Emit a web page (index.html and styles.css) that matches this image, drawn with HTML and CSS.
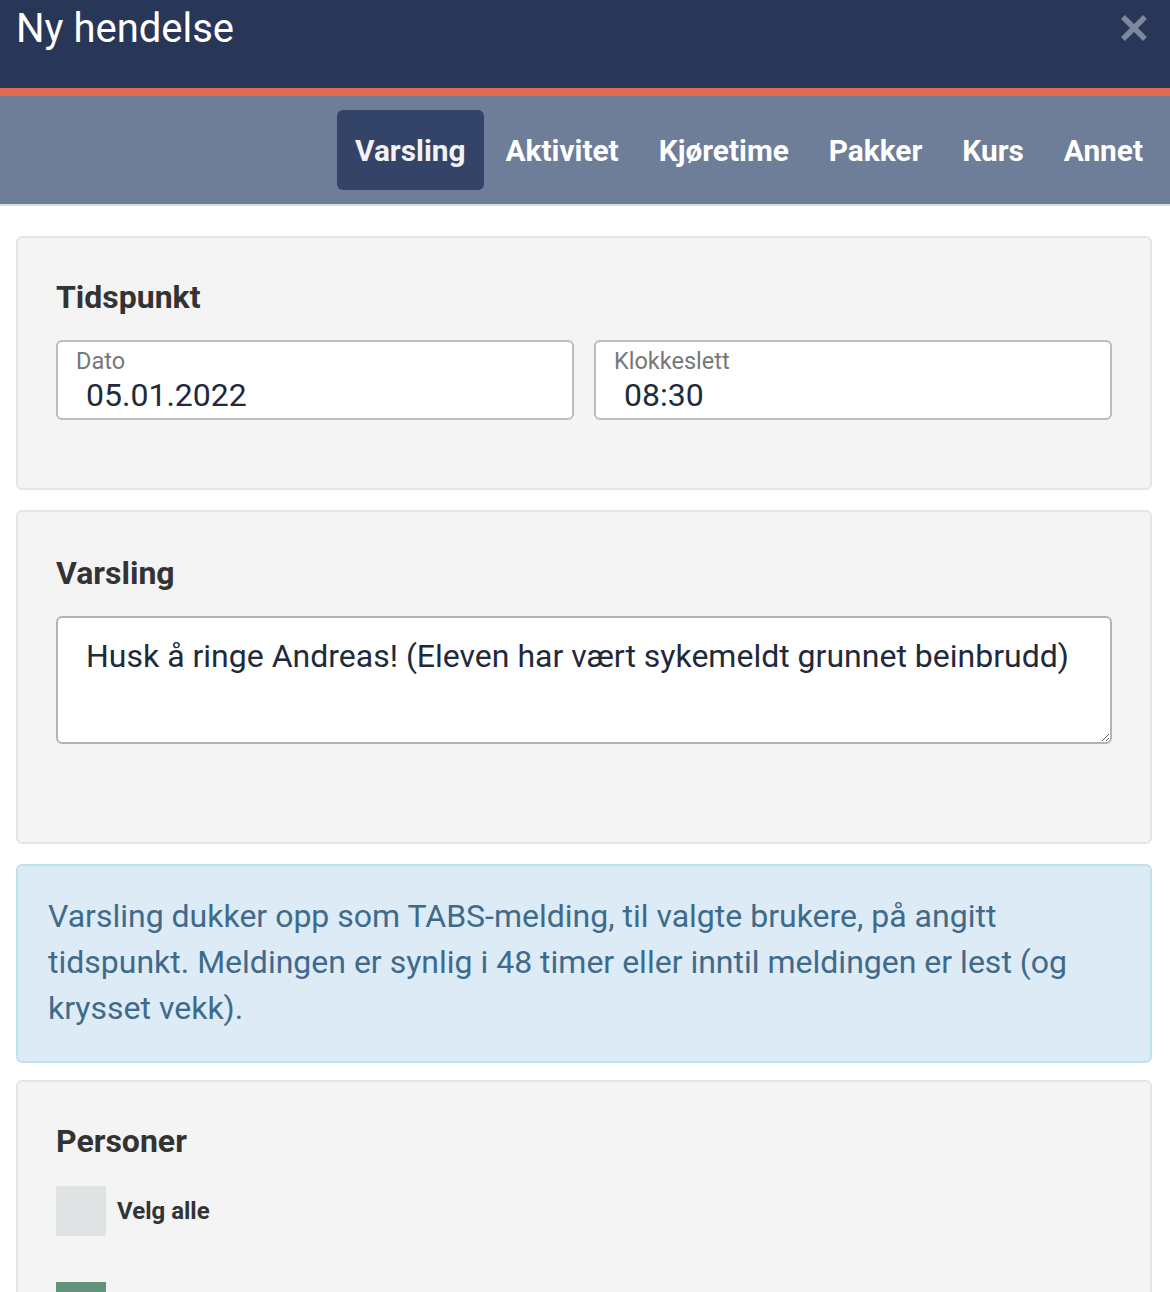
FILE: index.html
```html
<!DOCTYPE html>
<html lang="no">
<head>
  <meta charset="UTF-8">
  <title>Ny hendelse</title>
  <link rel="stylesheet" href="styles.css">
</head>
<body>

<!-- Header -->
<header class="modal-head">
  <h1>Ny hendelse</h1>
  <button class="close" aria-label="Lukk">
    <svg width="28" height="28" viewBox="0 0 28 28"><path d="M3 3 L25 25 M25 3 L3 25" stroke="#7d889f" stroke-width="5.5" fill="none"/></svg>
  </button>
</header>

<!-- Tabs -->
<nav class="tabs">
  <a class="tab active" href="#">Varsling</a>
  <a class="tab" href="#">Aktivitet</a>
  <a class="tab" href="#">Kjøretime</a>
  <a class="tab" href="#">Pakker</a>
  <a class="tab" href="#">Kurs</a>
  <a class="tab" href="#">Annet</a>
</nav>

<main>

  <!-- Tidspunkt -->
  <section class="panel">
    <h2>Tidspunkt</h2>
    <div class="row">
      <label class="field">
        <span class="field-label">Dato</span>
        <input type="text" value="05.01.2022">
      </label>
      <label class="field">
        <span class="field-label">Klokkeslett</span>
        <input type="text" value="08:30">
      </label>
    </div>
  </section>

  <!-- Varsling -->
  <section class="panel panel-msg">
    <h2>Varsling</h2>
    <textarea>Husk å ringe Andreas! (Eleven har vært sykemeldt grunnet beinbrudd)</textarea>
  </section>

  <div class="info">
    Varsling dukker opp som TABS-melding, til valgte brukere, på angitt tidspunkt. Meldingen er synlig i 48 timer eller inntil meldingen er lest (og krysset vekk).
  </div>

  <!-- Personer -->
  <section class="panel panel-people">
    <h2>Personer</h2>
    <div class="check-row"><span class="check"></span><b>Velg alle</b></div>
    <div class="check-row"><span class="check on"></span><b></b></div>
  </section>

</main>

</body>
</html>
```

FILE: styles.css
```css
/* Ny hendelse */
body { margin: 0; font-family: Roboto, "Liberation Sans", sans-serif; background: #fff; color: #333; }

.modal-head { height: 96px; box-sizing: border-box; background: #283657; border-bottom: 8px solid #e06b54; display: flex; justify-content: space-between; align-items: flex-start; padding: 0 16px; }
.modal-head h1 { margin: 0; padding-top: 5px; font-size: 40px; font-weight: 400; line-height: 47px; color: #fff; }
.close { background: none; border: 0; padding: 0; margin-top: 14px; margin-right: 6px; }
.close svg { display: block; }

.tabs { height: 110px; box-sizing: border-box; background: #6f7e98; border-bottom: 2px solid #d8dbe2; display: flex; justify-content: flex-end; align-items: center; padding: 0 9px 0 0; gap: 4px; }
.tab { height: 80px; padding: 0 18px; display: flex; align-items: center; font-size: 29.8px; font-weight: 700; color: #fff; text-decoration: none; border-radius: 6px; }
.tab.active { background: #344468; color: #f2f2f2; }

main { padding: 30px 18px 0 16px; }

.panel { background: #f4f4f4; border: 2px solid #e4e4e4; border-radius: 6px; padding: 40px 38px 38px; margin-bottom: 20px; }
.panel h2 { margin: 0 0 24px; font-size: 32px; line-height: 38px; font-weight: 700; color: #333; }

.row { display: flex; gap: 20px; margin-bottom: 30px; }
.field { flex: 1; height: 80px; box-sizing: border-box; background: #fff; border: 2px solid #bdbdbd; border-radius: 6px; padding: 5px 18px 0; display: flex; flex-direction: column; }
.field-label { font-size: 23.5px; line-height: 29px; color: #777; }
.field input { border: 0; outline: 0; padding: 0 0 0 10px; margin: 0; font: 400 32px/38px Roboto, "Liberation Sans", sans-serif; color: #1f2a3c; background: transparent; }

.panel-msg { padding-top: 42px; padding-bottom: 98px; }
textarea { display: block; width: 100%; height: 128px; box-sizing: border-box; border: 2px solid #b3b3b3; border-radius: 6px; padding: 18px 28px; font: 400 32px/40px Roboto, "Liberation Sans", sans-serif; color: #1f2a3c; resize: vertical; }

.info { background: #dcebf6; border: 2px solid #c2e2ea; border-radius: 6px; padding: 27px 30px 30px; font-size: 32px; line-height: 46px; color: #3f6a8b; margin-bottom: 17px; }

.panel-people h2 { margin-bottom: 26px; }
.check-row { display: flex; align-items: center; gap: 11px; margin-bottom: 46px; }
.check { width: 50px; height: 50px; background: #dfe3e3; }
.check.on { background: #63937c; }
.check-row b { font-size: 24px; color: #333; }
```
